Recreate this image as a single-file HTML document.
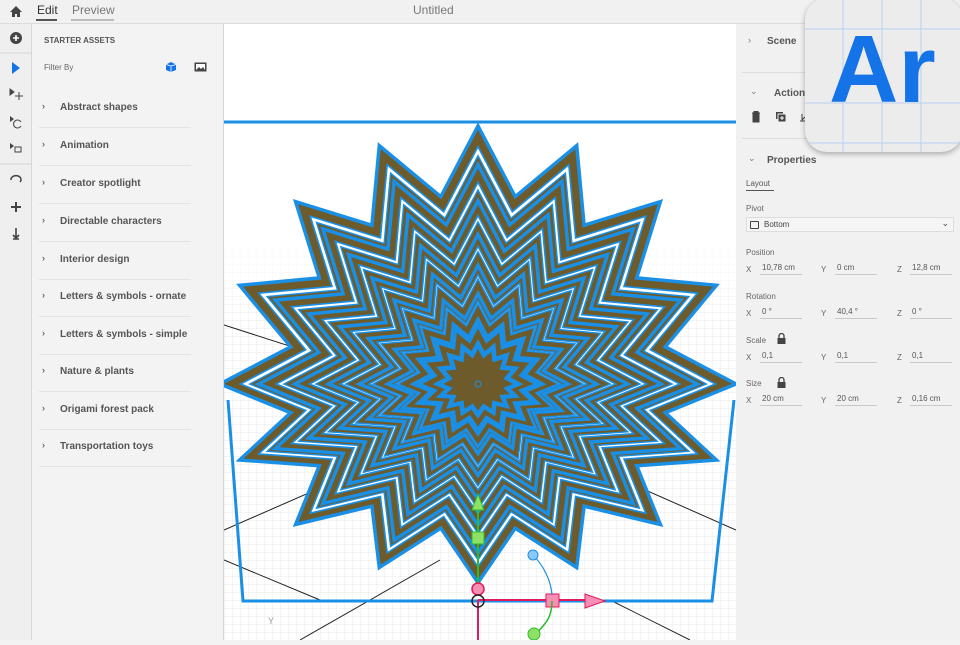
<!DOCTYPE html>
<html><head><meta charset="utf-8">
<style>
*{box-sizing:border-box;margin:0;padding:0}
body{width:960px;height:640px;overflow:hidden;background:#f3f3f3;font-family:"Liberation Sans",sans-serif;color:#4b4b4b;position:relative}
.top{position:absolute;left:0;top:0;width:960px;height:24px;background:#f1f1f1;border-bottom:1px solid #dcdcdc}
.tab{position:absolute;top:3px;font-size:12px}
.tool{position:absolute;left:0;top:24px;width:32px;height:616px;background:#efefef;border-right:1px solid #d8d8d8}
.panel{position:absolute;left:32px;top:24px;width:192px;height:616px;background:#f3f3f3;border-right:1px solid #d5d5d5}
.item{position:absolute;left:7px;width:152px;height:38px;border-bottom:1px solid #e4e4e4;font-size:10px;font-weight:bold;color:#555}
.item span{position:absolute;left:21px;top:12px}
.item i{position:absolute;left:3px;top:11px;font-style:normal;font-size:9px;color:#666}
.view{position:absolute;left:224px;top:24px;width:512px;height:616px;background:#fff;overflow:hidden}
.right{position:absolute;left:736px;top:24px;width:224px;height:616px;background:#f1f1f1}
.lbl{position:absolute;font-size:8px;color:#666}
.fld{position:absolute;font-size:8px;color:#555;border-bottom:1px solid #c8c8c8;width:42px;height:12px;padding-left:2px}
.logo{position:absolute;left:805px;top:-2px;width:158px;height:154px;border-radius:22px;background:#ececec;box-shadow:0 2px 6px rgba(0,0,0,.3);overflow:hidden}
</style></head><body>
<div class="top">
<svg style="position:absolute;left:9px;top:5px" width="14" height="13" viewBox="0 0 14 13"><path d="M7 1L1 7h2v5h3V9h2v3h3V7h2z" fill="#444"/></svg>
<div class="tab" style="left:37px;color:#333">Edit</div>
<div style="position:absolute;left:36px;top:19px;width:21px;height:2px;background:#555"></div>
<div class="tab" style="left:72px;color:#777">Preview</div>
<div style="position:absolute;left:71px;top:19px;width:43px;height:2px;background:#bbb"></div>
<div class="tab" style="left:413px;color:#777">Untitled</div>
</div>
<div class="tool">
<svg width="32" height="616" viewBox="0 24 32 616">
<circle cx="16" cy="38" r="6" fill="#444"/><path d="M16 35v6M13 38h6" stroke="#fff" stroke-width="1.6"/>
<line x1="0" y1="53" x2="32" y2="53" stroke="#d6d6d6"/>
<path d="M12 62l8 6-8 6z" fill="#1473e6"/>
<path d="M10 89l4 3-4 3z M15 96h8M19 92v8" fill="#444" stroke="#444" stroke-width="1"/>
<path d="M10 116l4 3-4 3z" fill="#444"/><path d="M21 126a4 4 0 1 1 0-4" stroke="#444" fill="none"/>
<path d="M10 143l4 3-4 3z" fill="#444"/><rect x="15" y="147" width="6" height="5" stroke="#444" fill="none"/>
<line x1="0" y1="164" x2="32" y2="164" stroke="#d6d6d6"/>
<path d="M11 180a5 4 0 1 1 9 2" stroke="#444" stroke-width="1.5" fill="none"/>
<path d="M16 202v10M11 207h10" stroke="#444" stroke-width="2"/>
<path d="M16 228v10M13 235l3 3 3-3M13 239h6" stroke="#444" stroke-width="1.6" fill="none"/>
</svg></div>
<div class="panel">
<div style="position:absolute;left:12px;top:12px;font-size:8px;font-weight:bold;color:#555">STARTER ASSETS</div>
<div style="position:absolute;left:12px;top:39px;font-size:8px;color:#666">Filter By</div>
<svg style="position:absolute;left:133px;top:37px" width="12" height="12"><path d="M6 1l5 2.5v5.5L6 11 1 9V3.5z" fill="#1473e6"/><path d="M6 5v6M1 3.5L6 5l5-1.5" stroke="#fff" stroke-width=".8" fill="none"/></svg>
<svg style="position:absolute;left:162px;top:38px" width="13" height="10"><rect x=".5" y=".5" width="12" height="9" fill="#444"/><rect x="2" y="2" width="9" height="6" fill="#fff"/><path d="M2 8l3-3 2 2 2-2 2 3z" fill="#444"/></svg>
<div class="item" style="top:66px"><i>›</i><span>Abstract shapes</span></div>
<div class="item" style="top:104px"><i>›</i><span>Animation</span></div>
<div class="item" style="top:142px"><i>›</i><span>Creator spotlight</span></div>
<div class="item" style="top:180px"><i>›</i><span>Directable characters</span></div>
<div class="item" style="top:218px"><i>›</i><span>Interior design</span></div>
<div class="item" style="top:255px"><i>›</i><span>Letters &amp; symbols - ornate</span></div>
<div class="item" style="top:293px"><i>›</i><span>Letters &amp; symbols - simple</span></div>
<div class="item" style="top:330px"><i>›</i><span>Nature &amp; plants</span></div>
<div class="item" style="top:368px"><i>›</i><span>Origami forest pack</span></div>
<div class="item" style="top:405px"><i>›</i><span>Transportation toys</span></div>
</div>
<div class="view">
<svg id="sv" width="512" height="616" viewBox="224 24 512 616">
<defs>
<pattern id="g" width="8" height="8" patternUnits="userSpaceOnUse"><path d="M8 0H0V8" fill="none" stroke="#e2e2e2" stroke-width=".7"/></pattern>
<linearGradient id="fade" x1="0" y1="0" x2="0" y2="1"><stop offset="0" stop-color="#fff" stop-opacity="1"/><stop offset="1" stop-color="#fff" stop-opacity="0"/></linearGradient>
</defs>
<rect x="224" y="240" width="512" height="400" fill="url(#g)"/>
<rect x="224" y="230" width="512" height="90" fill="url(#fade)"/>
<g stroke="#222" stroke-width="1">
<line x1="224" y1="325" x2="520" y2="420"/><line x1="224" y1="530" x2="430" y2="440"/>
<line x1="600" y1="470" x2="736" y2="530"/><line x1="300" y1="640" x2="440" y2="560"/>
<line x1="224" y1="560" x2="320" y2="600"/><line x1="610" y1="600" x2="690" y2="640"/>
</g>
<path d="M224 122H736" stroke="#1a8fe6" stroke-width="3"/>
<path d="M228 400L243 601H712L734 400" stroke="#1a8fe6" stroke-width="3" fill="none"/>
<g id="star"></g>
<path d="M478 600V640" stroke="#e0185c" stroke-width="2"/>
<path d="M478 600H590" stroke="#e0185c" stroke-width="2"/>
<path d="M585 594l20 7-20 7z" fill="#f78fb5" stroke="#e0185c"/>
<rect x="546" y="594" width="13" height="13" fill="#f78fb5" stroke="#e0185c"/>
<path d="M478 500V590" stroke="#2bbd2b" stroke-width="2"/>
<path d="M472 510l6-16 6 16z" fill="#8ee066" stroke="#2bbd2b"/>
<rect x="472" y="532" width="12" height="12" fill="#8ee066" stroke="#2bbd2b"/>
<path d="M552 601c0 20-10 25-16 33" stroke="#2bbd2b" stroke-width="1.5" fill="none"/>
<circle cx="534" cy="634" r="6" fill="#8ee066" stroke="#2bbd2b"/>
<path d="M533 555c10 10 18 25 19 40" stroke="#1a8fe6" stroke-width="1.2" fill="none"/>
<circle cx="533" cy="555" r="5" fill="#8ac8f7" stroke="#1a8fe6"/>
<circle cx="478" cy="589" r="6" fill="#f78fb5" stroke="#e0185c" stroke-width="1.5"/>
<circle cx="478" cy="601" r="6" fill="none" stroke="#222" stroke-width="1.5"/>
<text x="268" y="624" font-size="9" fill="#999" font-family="Liberation Sans">Y</text>
</svg>
</div>
<div class="right">
<div style="position:absolute;left:12px;top:11px;font-size:9px;color:#777">›</div>
<div style="position:absolute;left:31px;top:12px;font-size:10px;font-weight:bold;color:#555">Scene</div>
<div style="position:absolute;left:6px;top:48px;width:218px;height:1px;background:#ddd"></div>
<div style="position:absolute;left:14px;top:62px;font-size:9px;color:#777">⌄</div>
<div style="position:absolute;left:38px;top:64px;font-size:10px;font-weight:bold;color:#555">Actions</div>
<svg style="position:absolute;left:14px;top:86px" width="70" height="14"><path d="M2 3h8M4 3V1.5h4V3M3 4h6v8H3z" stroke="#444" fill="#444" stroke-width="1"/><rect x="26" y="2" width="7" height="7" fill="#444"/><rect x="28" y="4" width="8" height="8" fill="#444" stroke="#f1f1f1"/><path d="M32 6v4M30 8h4" stroke="#fff"/><path d="M50 11h8M52 4v6l3-3" stroke="#444" fill="none"/></svg>
<div style="position:absolute;left:6px;top:114px;width:218px;height:1px;background:#ddd"></div>
<div style="position:absolute;left:12px;top:129px;font-size:9px;color:#777">⌄</div>
<div style="position:absolute;left:31px;top:131px;font-size:10px;font-weight:bold;color:#555">Properties</div>
<div style="position:absolute;left:10px;top:155px;font-size:8px;color:#555">Layout</div>
<div style="position:absolute;left:10px;top:166px;width:28px;height:1px;background:#555"></div>
<div class="lbl" style="left:10px;top:180px">Pivot</div>
<div style="position:absolute;left:10px;top:193px;width:208px;height:15px;border:1px solid #ddd;background:#f5f5f5;font-size:8px;color:#444;padding:2px 0 0 17px">Bottom<span style="position:absolute;right:4px;top:0px;font-size:9px">⌄</span><div style="position:absolute;left:3px;top:3px;width:9px;height:8px;border:1px solid #444;border-radius:1px"></div></div>
<div class="lbl" style="left:10px;top:224px">Position</div>
<div class="lbl" style="left:10px;top:241px">X</div><div class="fld" style="left:24px;top:239px">10,78 cm</div>
<div class="lbl" style="left:85px;top:241px">Y</div><div class="fld" style="left:99px;top:239px">0 cm</div>
<div class="lbl" style="left:161px;top:241px">Z</div><div class="fld" style="left:174px;top:239px">12,8 cm</div>
<div class="lbl" style="left:10px;top:268px">Rotation</div>
<div class="lbl" style="left:10px;top:285px">X</div><div class="fld" style="left:24px;top:283px">0 °</div>
<div class="lbl" style="left:85px;top:285px">Y</div><div class="fld" style="left:99px;top:283px">40,4 °</div>
<div class="lbl" style="left:161px;top:285px">Z</div><div class="fld" style="left:174px;top:283px">0 °</div>
<div class="lbl" style="left:10px;top:312px">Scale</div>
<svg style="position:absolute;left:41px;top:309px" width="9" height="11"><path d="M2 5V3a2.5 2.5 0 0 1 5 0v2" stroke="#444" fill="none" stroke-width="1.3"/><rect x="0.5" y="5" width="8" height="6" fill="#444"/></svg>
<div class="lbl" style="left:10px;top:329px">X</div><div class="fld" style="left:24px;top:327px">0,1</div>
<div class="lbl" style="left:85px;top:329px">Y</div><div class="fld" style="left:99px;top:327px">0,1</div>
<div class="lbl" style="left:161px;top:329px">Z</div><div class="fld" style="left:174px;top:327px">0,1</div>
<div class="lbl" style="left:10px;top:355px">Size</div>
<svg style="position:absolute;left:41px;top:353px" width="9" height="11"><path d="M2 5V3a2.5 2.5 0 0 1 5 0v2" stroke="#444" fill="none" stroke-width="1.3"/><rect x="0.5" y="5" width="8" height="6" fill="#444"/></svg>
<div class="lbl" style="left:10px;top:372px">X</div><div class="fld" style="left:24px;top:370px">20 cm</div>
<div class="lbl" style="left:85px;top:372px">Y</div><div class="fld" style="left:99px;top:370px">20 cm</div>
<div class="lbl" style="left:161px;top:372px">Z</div><div class="fld" style="left:174px;top:370px">0,16 cm</div>
</div>
<div class="logo">
<svg width="158" height="154" style="position:absolute;left:0;top:0">
<g stroke="#b9d0ee" stroke-width="1"><line x1="38" y1="0" x2="38" y2="154"/><line x1="77" y1="0" x2="77" y2="154"/><line x1="116" y1="0" x2="116" y2="154"/><line x1="0" y1="31" x2="158" y2="31"/><line x1="0" y1="105" x2="158" y2="105"/><line x1="0" y1="145" x2="158" y2="145"/></g>
<text x="24" y="104" font-family="Liberation Sans" font-weight="bold" font-size="96" fill="#1473e6">Ar</text>
</svg></div>
<script>
(function(){
var g=document.getElementById('star'),cx=478,cy=384,R=258,ri=0.74,ns='http://www.w3.org/2000/svg';
function pts(s,rot){var a=[];for(var i=0;i<32;i++){var ang=-Math.PI/2+i*Math.PI/16+(rot||0);var r=(i%2?R*ri:R)*s;var dx=r*Math.cos(ang),dy=r*Math.sin(ang);if(dy>0)dy*=0.77;a.push((cx+dx).toFixed(1)+','+(cy+dy).toFixed(1));}return a.join(' ');}
function poly(s,fill,stroke,w,rot){var p=document.createElementNS(ns,'polygon');p.setAttribute('points',pts(s,rot));p.setAttribute('fill',fill);p.setAttribute('stroke',stroke);p.setAttribute('stroke-width',w);p.setAttribute('stroke-linejoin','miter');g.appendChild(p);}
var sc=[1,0.85,0.71,0.58,0.46,0.35,0.25,0.16];
for(var k=0;k<sc.length;k++){var s=sc[k];poly(s,'#6e5b2b','#1a8fe6',3.5);poly(s*0.92,'#fff','#1a8fe6',1.6);poly(s*0.885,'#6e5b2b','#1a8fe6',1.4);}
poly(0.09,'#6e5b2b','#6e5b2b',1);
var c=document.createElementNS(ns,'circle');c.setAttribute('cx',cx);c.setAttribute('cy',cy);c.setAttribute('r',3);c.setAttribute('fill','none');c.setAttribute('stroke','#1a8fe6');g.appendChild(c);
})();
</script>
</body></html>
